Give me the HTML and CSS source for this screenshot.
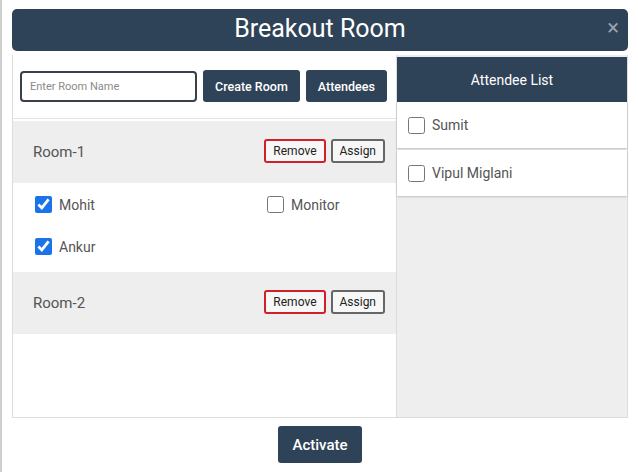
FILE: index.html
```html
<!DOCTYPE html>
<html lang="en">
<head>
  <meta charset="UTF-8" />
  <meta name="viewport" content="width=device-width, initial-scale=1.0"/>
  <title>Breakout Room</title>
  <link rel="stylesheet" href="styles.css">
</head>
<body>
  <div class="modal">
    <div class="modal-header">
      <h1>Breakout Room</h1>
      <span class="close">&times;</span>
    </div>

    <div class="modal-body">
      <div class="rooms">
        <div class="toolbar">
          <input type="text" class="room-input" placeholder="Enter Room Name" />
          <button class="btn btn-small">Create Room</button>
          <button class="btn btn-small">Attendees</button>
        </div>

        <div class="room-row">
          <span class="room-name">Room-1</span>
          <div class="room-actions">
            <button class="btn-outline btn-remove">Remove</button>
            <button class="btn-outline btn-assign">Assign</button>
          </div>
        </div>
        <div class="members">
          <label class="check"><input type="checkbox" checked /> Mohit</label>
          <label class="check"><input type="checkbox" /> Monitor</label>
          <label class="check"><input type="checkbox" checked /> Ankur</label>
        </div>

        <div class="room-row">
          <span class="room-name">Room-2</span>
          <div class="room-actions">
            <button class="btn-outline btn-remove">Remove</button>
            <button class="btn-outline btn-assign">Assign</button>
          </div>
        </div>
      </div>

      <div class="attendees">
        <div class="attendees-header">Attendee List</div>
        <label class="attendee"><input type="checkbox" /> Sumit</label>
        <label class="attendee"><input type="checkbox" /> Vipul Miglani</label>
      </div>
    </div>

    <div class="footer">
      <button class="btn btn-activate">Activate</button>
    </div>
  </div>
</body>
</html>
```

FILE: styles.css
```css
:root {
  --primary: #2f4358;
  --panel: #eeeeee;
  --text: #555;
}
body {
  margin: 0;
  font-family: Roboto, 'Liberation Sans', sans-serif;
  color: var(--text);
  background: #fff;
  border-left: 2px solid #cfcfcf;
  min-height: 472px;
  box-sizing: border-box;
}
.modal {
  width: 616px;
  margin-left: 10px;
  padding-top: 9px;
}
.modal-header {
  position: relative;
  height: 42px;
  background-color: var(--primary);
  border-radius: 5px;
  display: flex;
  align-items: center;
  justify-content: center;
}
.modal-header h1 {
  margin: 0 0 3px;
  color: #fff;
  font-size: 25px;
  font-weight: 400;
}
.close {
  position: absolute;
  right: 9px;
  top: 8px;
  color: #9aa4ae;
  font-size: 22px;
  line-height: 22px;
}
.modal-body {
  display: flex;
  margin-top: 4px;
  height: 362px;
  border: 1px solid #dcdcdc;
  border-top: none;
}
.rooms {
  width: 383px;
  background: #fff;
}
.toolbar {
  display: flex;
  align-items: center;
  gap: 6px;
  padding: 15px 0 16px 7px;
  border-bottom: 1px solid #e4e4e4;
  margin-bottom: 2px;
}
.room-input {
  width: 177px;
  height: 31px;
  box-sizing: border-box;
  border: 2px solid #3a4048;
  border-radius: 4px;
  padding: 0 8px;
  font-family: inherit;
  font-size: 11px;
}
.room-input::placeholder {
  color: #8a8a8a;
}
.btn {
  background-color: var(--primary);
  color: #fff;
  border: none;
  border-radius: 3px;
  font-family: inherit;
  cursor: pointer;
}
.btn-small {
  height: 32px;
  padding: 0 12px;
  font-size: 12.5px;
  font-weight: 500;
}
.room-row {
  display: flex;
  align-items: center;
  justify-content: space-between;
  height: 62px;
  padding: 0 11px 0 20px;
  background: var(--panel);
}
.room-name {
  font-size: 15px;
  color: #555;
}
.room-actions {
  display: flex;
  gap: 5px;
  margin-bottom: 3px;
}
.btn-outline {
  height: 24px;
  padding: 0 7px;
  background: #f7f7f7;
  border-radius: 3px;
  font-family: inherit;
  font-size: 12px;
  color: #222;
}
.btn-remove {
  border: 2px solid #d0202a;
}
.btn-assign {
  border: 2px solid #666;
}
.members {
  display: grid;
  grid-template-columns: 232px 1fr;
  row-gap: 25px;
  padding: 13px 0 17px 22px;
}
.check, .attendee {
  display: flex;
  align-items: center;
  gap: 7px;
  font-size: 14px;
  color: #555;
}
input[type="checkbox"] {
  width: 17px;
  height: 17px;
  margin: 0;
  accent-color: #1a73e8;
}
.attendees {
  flex: 1;
  background: var(--panel);
  border-left: 1px solid #dcdcdc;
  padding-top: 2px;
}
.attendees-header {
  height: 45px;
  background-color: var(--primary);
  color: #fff;
  display: flex;
  align-items: center;
  justify-content: center;
  font-size: 14px;
}
.attendee {
  height: 46px;
  padding-left: 11px;
  background: #fff;
  margin-bottom: 2px;
  box-shadow: 0 1px 2px rgba(0,0,0,0.2);
}
.footer {
  display: flex;
  justify-content: center;
  padding-top: 8px;
}
.btn-activate {
  height: 37px;
  padding: 0 14px;
  font-size: 15px;
  font-weight: 500;
}
```
